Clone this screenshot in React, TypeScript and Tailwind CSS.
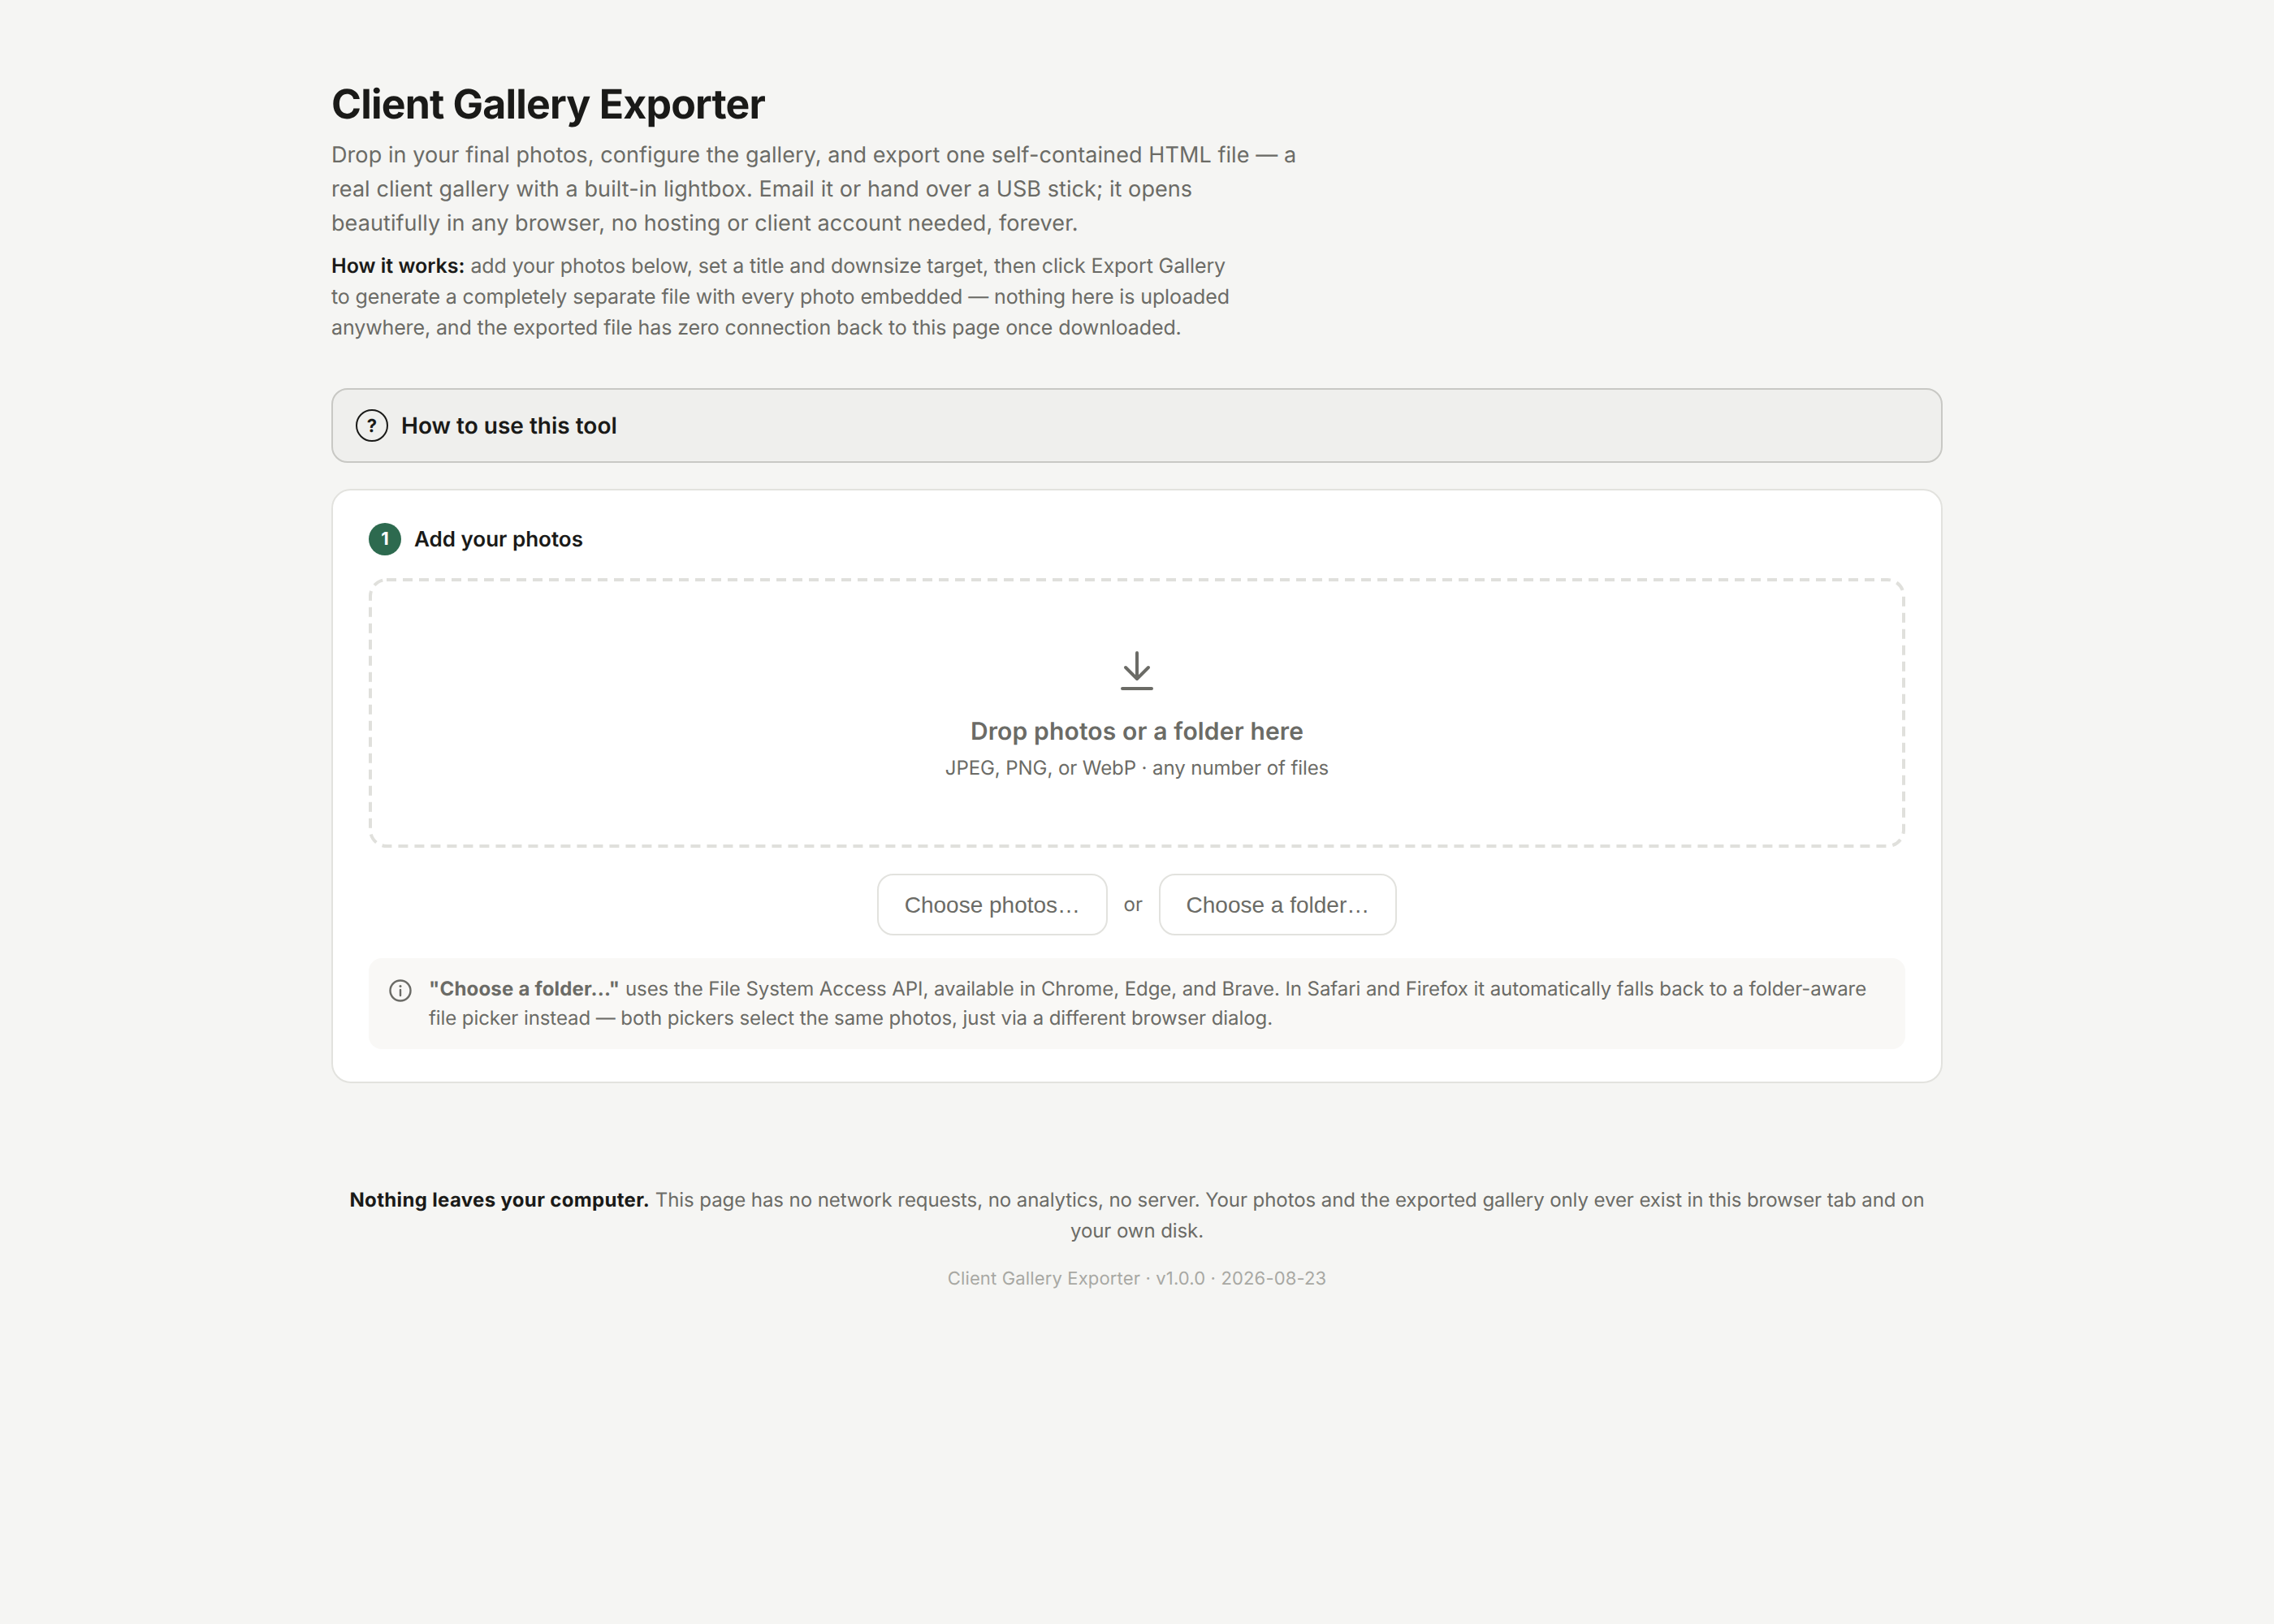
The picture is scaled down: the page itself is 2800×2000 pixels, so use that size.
import React from "react";

const inter = "font-['Inter',sans-serif]";

export default function App() {
  return (
    <div className={`min-h-[2000px] bg-[#f5f5f3] ${inter} text-[#1a1a18] [text-rendering:geometricPrecision]`}>
      <div className="mx-auto w-[2080px] px-[48px] pt-[98px] pb-[96px]">
        <header className="mb-[55px]">
          <h1 className="m-0 text-[50px] leading-[62px] font-bold tracking-[-0.8px] text-[#1a1a18]">Client Gallery Exporter</h1>
          <p className="mt-[10px] max-w-[1200px] text-[27px] leading-[42px] tracking-[0.08px] text-[#6b6b66]">
            Drop in your final photos, configure the gallery, and export one self-contained HTML file — a real client gallery with a built-in lightbox. Email it or hand over a USB stick; it opens beautifully in any browser, no hosting or client account needed, forever.
          </p>
          <p className="mt-[13px] max-w-[1120px] text-[25px] leading-[38px] tracking-[-0.12px] text-[#6b6b66]">
            <strong className="font-semibold tracking-normal text-[#1a1a18]">How it works:</strong> add your photos below, set a title and downsize target, then click Export Gallery to generate a completely separate file with every photo embedded — nothing here is uploaded anywhere, and the exported file has zero connection back to this page once downloaded.
          </p>
        </header>

        <div className="flex h-[92px] items-center gap-[16px] rounded-[20px] border-2 border-[#c8c8c4] bg-[#efefed] px-[28px]">
          <svg width="40" height="40" viewBox="0 0 40 40" fill="none" className="shrink-0">
            <circle cx="20" cy="20" r="19" stroke="#1a1a18" strokeWidth="2" />
            <text x="20" y="28" textAnchor="middle" fontSize="22" fontWeight="700" fill="#1a1a18" fontFamily="Inter, sans-serif">?</text>
          </svg>
          <span className="text-[28px] font-semibold text-[#1a1a18]">How to use this tool</span>
        </div>

        <section className="mt-[32px] rounded-[24px] border-2 border-[#e2e2de] bg-white px-[44px] pt-[40px] pb-[40px]">
          <div className="flex items-center gap-[16px]">
            <span className="flex h-[40px] w-[40px] items-center justify-center rounded-full bg-[#2d6a4f] text-[22px] font-bold text-white">1</span>
            <span className="pt-[1px] text-[26px] font-semibold text-[#1a1a18]">Add your photos</span>
          </div>

          <div className="relative mt-[28px] flex h-[332px] flex-col items-center pt-[90px]">
            <svg className="absolute inset-0" width="1892" height="332" viewBox="0 0 1892 332" fill="none">
              <rect x="2" y="2" width="1888" height="328" rx="20" stroke="#e0e0dc" strokeWidth="4" strokeDasharray="12 8" />
            </svg>
            <svg width="40" height="50" viewBox="0 0 40 50" fill="none" stroke="#6b6b66" strokeWidth="4" strokeLinecap="round" strokeLinejoin="round">
              <path d="M20 2V34M6 20L20 34L34 20" />
              <path d="M2 46H38" />
            </svg>
            <div className="mt-[27px] text-[30px] leading-[44px] font-semibold tracking-[0.15px] text-[#6b6b66]">Drop photos or a folder here</div>
            <div className="mt-[5px] text-[24px] leading-[36px] tracking-[-0.08px] text-[#6b6b66]">JPEG, PNG, or WebP · any number of files</div>
          </div>

          <div className="mt-[32px] flex items-center justify-center gap-[20px]">
            <button className="h-[76px] rounded-[20px] border-2 border-[#e2e2de] bg-white px-[31.5px] pt-[2px] font-['Liberation_Sans',sans-serif] text-[28px] text-[#6b6b66]">Choose photos…</button>
            <span className="text-[24px] text-[#6b6b66]">or</span>
            <button className="h-[76px] rounded-[20px] border-2 border-[#e2e2de] bg-white px-[31.5px] pt-[2px] font-['Liberation_Sans',sans-serif] text-[28px] text-[#6b6b66]">Choose a folder…</button>
          </div>

          <div className="mt-[28px] flex gap-[21px] rounded-[16px] bg-[#f9f8f6] py-[20px] pr-[26px] pl-[25px]">
            <svg width="28" height="28" viewBox="0 0 28 28" fill="none" stroke="#6b6b66" strokeWidth="2.4" strokeLinecap="round" className="mt-[6px] shrink-0">
              <circle cx="14" cy="14" r="12.5" />
              <path d="M14 13V20" />
              <path d="M14 8.5V8.6" strokeWidth="3" />
            </svg>
            <p className="text-[24px] leading-[36px] tracking-[-0.08px] text-[#6b6b66]">
              <strong className="font-bold tracking-[0.2px]">"Choose a folder..."</strong> uses the File System Access API, available in Chrome, Edge, and Brave. In Safari and Firefox it automatically falls back to a folder-aware file picker instead — both pickers select the same photos, just via a different browser dialog.
            </p>
          </div>
        </section>

        <footer className="mt-[125px] text-center">
          <p className="text-[24px] leading-[38px] tracking-[-0.08px] text-[#6b6b66]">
            <strong className="font-bold tracking-[0.33px] text-[#1a1a18]">Nothing leaves your computer.</strong> This page has no network requests, no analytics, no server. Your photos and the exported gallery only ever exist in this browser tab and on your own disk.
          </p>
          <p className="mt-[23px] text-[22px] leading-[34px] tracking-[0.15px] text-[#a8a8a3]">Client Gallery Exporter · v1.0.0 · 2026-08-23</p>
        </footer>
      </div>
    </div>
  );
}
